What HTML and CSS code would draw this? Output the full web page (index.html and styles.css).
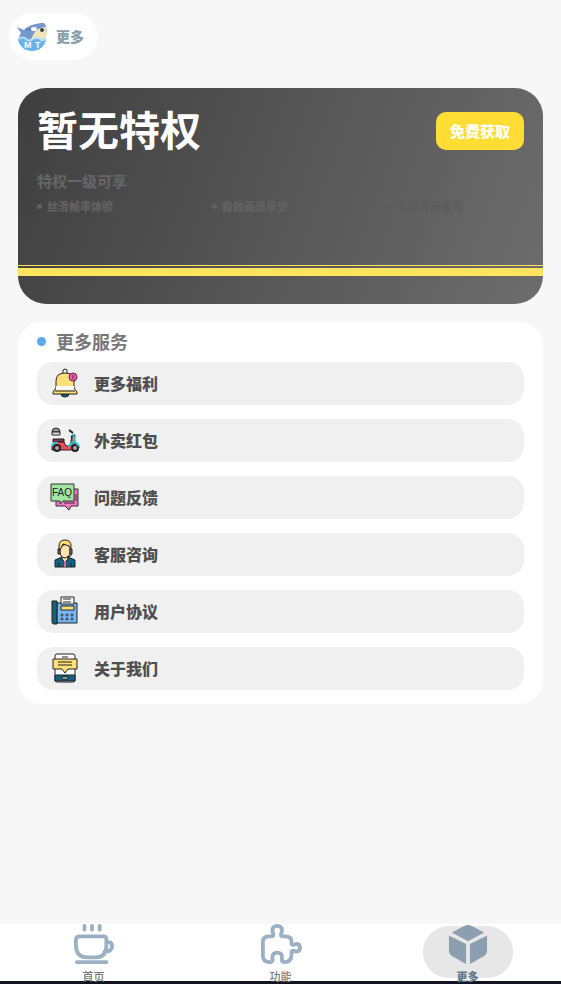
FILE: index.html
```html
<!DOCTYPE html>
<html lang="zh-CN">
<head>
    <meta charset="UTF-8">
    <meta name="viewport" content="width=device-width, initial-scale=1.0">
    <title>更多</title>
    <link rel="stylesheet" href="styles.css">
</head>
<body>
    <header class="header">
        <div class="brand">
            <svg class="avatar" viewBox="0 0 30 30" aria-hidden="true">
                <path d="M1 16h28a14 13 0 0 1-28 0z" fill="#69b2e8"/>
                <path d="M0 5l7 3C12 3 19 1 27 1l2 3 1 6c0 5-4 7-9 7H2c0-3 1-4 2-6z" fill="#7798ce"/>
                <path d="M14 17c2-3 3-7 6-9s5-3 9-3l1 6c0 4-3 6-6 6z" fill="#f3e4b8"/>
                <ellipse cx="17" cy="7" rx="3" ry="2" fill="#fff"/>
                <ellipse cx="25" cy="8" rx="2" ry="2" fill="#34415f"/>
                <path d="M10 6v3M13 6v3" stroke="#48659c"/>
                <path d="M2 17q4-3 7 0t7 0 7 0 6-1" fill="none" stroke="#b9e2fa" stroke-width="2"/>
                <text class="avatar-text" x="7" y="26">M</text>
                <text class="avatar-text" x="18" y="26">T</text>
            </svg>
            <span>更多</span>
        </div>
    </header>

    <main class="content">
        <section class="vip-card">
            <div class="vip-top">
                <h1>暂无特权</h1>
                <button type="button" class="get-btn">免费获取</button>
            </div>
            <h2>特权一级可享</h2>
            <ul class="perks">
                <li>丝滑帧率体验</li>
                <li>极致画质享受</li>
                <li class="dim">专属客服服务</li>
            </ul>
            <div class="stripe"></div>
        </section>

        <section class="services">
            <h2>更多服务</h2>
            <nav class="service-list">
                <a href="#welfare" class="service">
                    <svg viewBox="0 0 30 30" aria-hidden="true">
                        <path d="M13 5V2q2-2 4 0v3" fill="#fff" stroke="#222"/>
                        <path d="M11 26h8q0 3-4 3t-4-3" fill="#17607d" stroke="#222"/>
                        <path d="M6 20v-7q0-8 9-8t9 8v7l3 4v2H3v-2z" fill="#ffdf78" stroke="#222"/>
                        <path d="M6 18h18v4H6z" fill="#f7f7f7"/>
                        <path d="M5 23h20" stroke="#222"/>
                        <circle cx="23" cy="9" r="4" fill="#ee5ab0" stroke="#642745"/>
                        <path d="M23 7v4" stroke="#642745"/>
                    </svg>
                    <span>更多福利</span>
                </a>
                <a href="#takeout" class="service">
                    <svg viewBox="0 0 30 30" aria-hidden="true">
                        <path d="M2 7q0-4 4-4t4 4z" fill="#999" stroke="#222"/>
                        <path d="M2 7h8v3H2z" fill="#ddd" stroke="#222"/>
                        <path d="M3 14h11v3H3z" fill="#983047" stroke="#222"/>
                        <path d="M2 23q0-6 5-6h7l2 4h4l2-10h3l-1 7q5 1 5 5h-5l-3 2H2z" fill="#f04c55" stroke="#222"/>
                        <path d="M19 5l4 3M21 12l4-2" stroke="#222" stroke-width="2"/>
                        <path d="M23 9l2 7" stroke="#22cbd5" stroke-width="2"/>
                        <circle cx="7" cy="23" r="3" fill="#aaa" stroke="#222" stroke-width="2"/>
                        <circle cx="25" cy="23" r="3" fill="#aaa" stroke="#222" stroke-width="2"/>
                        <path d="M2 21q1-4 6-3M19 22q1-5 6-5l4 4" fill="none" stroke="#22cbd5" stroke-width="2"/>
                    </svg>
                    <span>外卖红包</span>
                </a>
                <a href="#feedback" class="service">
                    <svg viewBox="0 0 30 30" aria-hidden="true">
                        <path d="M6 7h22v17h-7l-2 4-4-4H6z" fill="#f477c4" stroke="#333"/>
                        <path d="M1 2h23v17H13l-3 3v-3H1z" fill="#a2e4a3" stroke="#333"/>
                        <path d="M14 21h11M26 12v7" stroke="#333"/>
                        <text class="faq-text" x="2" y="14">FAQ</text>
                    </svg>
                    <span>问题反馈</span>
                </a>
                <a href="#support" class="service">
                    <svg viewBox="0 0 30 30" aria-hidden="true">
                        <path d="M5 28v-7l7-3h6l7 3v7z" fill="#17607d" stroke="#222"/>
                        <path d="M12 16v4l3 3 3-3v-4" fill="#ffe1b4" stroke="#222"/>
                        <path d="M10 8v5q0 5 5 6 5-1 5-6V8l-4-3z" fill="#ffe1b4" stroke="#222"/>
                        <path d="M9 11V7q0-6 6-6t6 6v4l-2-4-6-2-3 6z" fill="#ffda71" stroke="#222"/>
                        <path d="M8 10v5h2v-5zM20 10v5h2v-5z" fill="#777" stroke="#222"/>
                        <path d="M22 15q-1 3-5 3" fill="none" stroke="#222"/>
                        <path d="M15 22v6" stroke="#ec5f9e" stroke-width="2"/>
                        <path d="M9 28v-4M21 28v-4" stroke="#222"/>
                    </svg>
                    <span>客服咨询</span>
                </a>
                <a href="#terms" class="service">
                    <svg viewBox="0 0 30 30" aria-hidden="true">
                        <path d="M7 7h20v20H7z" fill="#75b6f6" stroke="#222"/>
                        <path d="M11 8V1h13v7z" fill="#fff" stroke="#222"/>
                        <path d="M13 3h8M13 6h8" stroke="#222"/>
                        <path d="M11 10h13v4H11z" fill="#ffdf78" stroke="#222"/>
                        <path d="M2 5h5v23H4q-2 0-2-2z" fill="#17607d" stroke="#222"/>
                        <g fill="#fff" stroke="#222">
                            <circle cx="12" cy="19" r="1"/>
                            <circle cx="17" cy="19" r="1"/>
                            <circle cx="22" cy="19" r="1"/>
                            <circle cx="12" cy="23" r="1"/>
                            <circle cx="17" cy="23" r="1"/>
                            <circle cx="22" cy="23" r="1"/>
                        </g>
                    </svg>
                    <span>用户协议</span>
                </a>
                <a href="#about" class="service">
                    <svg viewBox="0 0 30 30" aria-hidden="true">
                        <rect x="5" y="1" width="20" height="28" rx="2" fill="#fff" stroke="#222"/>
                        <path d="M5 22h20v6H5z" fill="#17607d" stroke="#222"/>
                        <path d="M12 24h6v2h-6z" fill="#fff" stroke="#222"/>
                        <path d="M12 4h6" stroke="#222"/>
                        <path d="M3 6h24v10h-9l-3 4-3-4H3z" fill="#ffdf78" stroke="#222"/>
                        <path d="M8 9h14M8 12h14" stroke="#222"/>
                    </svg>
                    <span>关于我们</span>
                </a>
            </nav>
        </section>
    </main>

    <nav class="tabbar">
        <a href="#home" class="tab">
            <svg viewBox="0 0 42 42" aria-hidden="true">
                <path d="M11 2v4M19 2v4M27 2v4"/>
                <path d="M6 13h25q3 0 3 3v6q0 13-11 13h-9Q2 35 2 22v-5q0-4 4-4zM34 19h2q4 0 4 4 0 6-8 6M3 40h31"/>
            </svg>
            <span>首页</span>
        </a>
        <a href="#features" class="tab">
            <svg viewBox="0 0 42 42" aria-hidden="true">
                <path d="M8 13h3q2 0 2-2-1-3-1-4 0-5 5-5t5 5q0 1-1 4 0 2 2 2h3q6 0 6 6v1q0 2 2 2l3-1q4 0 4 4t-4 4l-3-1q-2 0-2 2v2q0 8-7 8-3 0-3-2v-3q0-5-5-5t-5 5v3q0 2-3 2-7 0-7-7V19q0-6 6-6z"/>
            </svg>
            <span>功能</span>
        </a>
        <a href="#more" class="tab active">
            <svg viewBox="0 0 42 42" aria-hidden="true">
                <path d="M4 9L17 2q4-2 8 0l13 7-17 9z"/>
                <path d="M1 12l18 9v21L5 34q-4-2-4-6zM41 12l-18 9v21l14-8q4-2 4-6z"/>
            </svg>
            <span>更多</span>
        </a>
    </nav>
</body>
</html>
```
FILE: styles.css
```css
* {
    box-sizing: border-box;
}
body {
    margin: 0;
    min-height: 100vh;
    display: flex;
    flex-direction: column;
    background-color: #f7f7f7;
    font-family: "Noto Sans CJK SC", sans-serif;
    font-weight: 900;
}
h1, h2, ul {
    margin: 0;
    padding: 0;
}
a {
    color: inherit;
    text-decoration: none;
}
.header {
    padding: 13px 9px 0;
}
.brand {
    display: inline-flex;
    align-items: center;
    gap: 9px;
    height: 47px;
    padding: 0 14px 2px 8px;
    border-radius: 24px;
    background-color: white;
    color: #8b9eae;
    font-size: 14px;
}
.avatar {
    width: 30px;
    height: 30px;
    margin-top: 2px;
}
.avatar-text {
    font: 700 9px "Liberation Sans", sans-serif;
    fill: #f4fbff;
}
.content {
    flex: 1;
    padding: 28px 18px;
}
.vip-card {
    display: flex;
    flex-direction: column;
    height: 216px;
    padding-top: 18px;
    border-radius: 28px;
    background: linear-gradient(110deg, #3f3f3f, #6d6d6d);
    overflow: hidden;
}
.vip-top {
    display: flex;
    align-items: center;
    justify-content: space-between;
    height: 50px;
    padding: 0 19px;
}
.vip-card h1 {
    padding-bottom: 6px;
    color: white;
    font-size: 41px;
    line-height: 44px;
}
.get-btn {
    height: 38px;
    padding: 0 14px 2px;
    border: none;
    border-radius: 10px;
    background-color: #ffdd35;
    color: white;
    font: inherit;
    font-size: 15px;
    cursor: pointer;
}
.vip-card h2 {
    margin-top: 14px;
    padding: 0 19px;
    color: #666;
    font-size: 15px;
    line-height: 22px;
}
.perks {
    display: grid;
    grid-template-columns: repeat(3, 1fr);
    margin-top: 4px;
    color: #626262;
    font-size: 11px;
    line-height: 20px;
    list-style: none;
}
.perks li {
    display: flex;
    align-items: center;
    gap: 5px;
    padding-left: 19px;
}
.perks li::before {
    content: "";
    width: 5px;
    height: 5px;
    border-radius: 50%;
    background-color: currentColor;
}
.perks .dim {
    color: #5d5d5d;
}
.stripe {
    height: 11px;
    margin: auto 0 28px;
    border-top: 1px solid #ffe45e;
    border-bottom: 8px solid #ffe45e;
}
.services {
    margin-top: 18px;
    padding: 7px 19px 14px;
    border-radius: 24px;
    background-color: white;
}
.services h2 {
    display: flex;
    align-items: center;
    gap: 10px;
    color: #777;
    font-size: 18px;
    line-height: 24px;
}
.services h2::before {
    content: "";
    width: 9px;
    height: 9px;
    border-radius: 50%;
    background-color: #5ea6f2;
}
.service-list {
    display: grid;
    gap: 14px;
    margin-top: 9px;
}
.service {
    display: flex;
    align-items: center;
    gap: 14px;
    height: 43px;
    padding: 0 13px 2px;
    border-radius: 16px;
    background-color: #f0f0f0;
    color: #4f4f4f;
    font-size: 16px;
}
.service svg {
    width: 30px;
    height: 30px;
}
.faq-text {
    font: 10px "Liberation Sans", sans-serif;
    fill: #222;
}
.tabbar {
    position: sticky;
    bottom: 0;
    display: flex;
    justify-content: space-around;
    height: 60px;
    border-bottom: 3px solid #111520;
    background-color: white;
}
.tab {
    display: flex;
    flex-direction: column;
    align-items: center;
    width: 90px;
    height: 52px;
    margin-top: 2px;
    border-radius: 26px;
    color: #777;
    font-size: 11px;
    font-weight: 500;
    line-height: 16px;
}
.tab svg {
    flex: none;
    width: 40px;
    height: 40px;
    margin-top: -2px;
    fill: none;
    stroke: #9bb0c4;
    stroke-width: 4;
    stroke-linecap: round;
    stroke-linejoin: round;
    overflow: visible;
}
.tab span {
    margin-top: 4px;
}
.tab.active {
    background-color: #e7e7e7;
    color: #60788c;
    font-weight: 900;
}
.tab.active svg {
    fill: #8b9fb1;
    stroke: none;
}
```
